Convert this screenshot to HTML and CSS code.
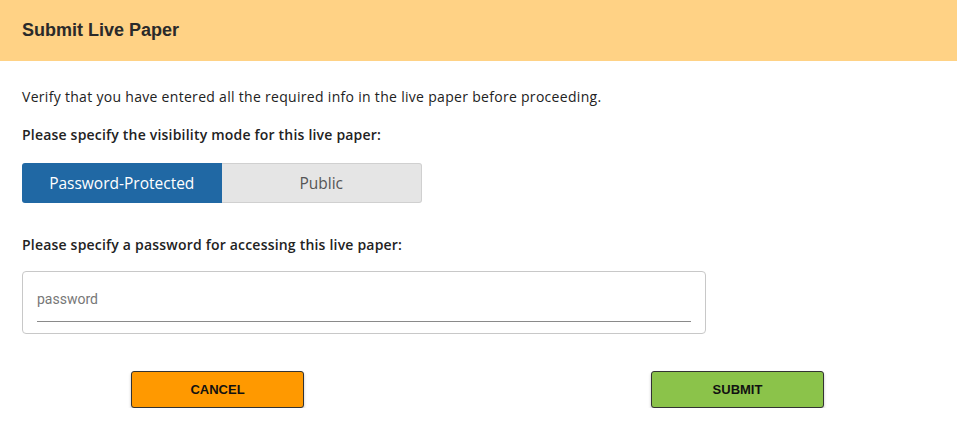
FILE: index.html
```html
<!DOCTYPE html>
<html>
<head>
<meta charset="utf-8">
<link rel="stylesheet" href="styles.css">
</head>
<body>
<div class="dialog">
  <div class="header"><h1 class="title">Submit Live Paper</h1></div>
  <div class="content">
    <p class="intro">Verify that you have entered all the required info in the live paper before proceeding.</p>
    <p class="label">Please specify the visibility mode for this live paper:</p>
    <div class="toggle">
      <div class="opt active">Password-Protected</div>
      <div class="opt">Public</div>
    </div>
    <p class="label label2">Please specify a password for accessing this live paper:</p>
    <div class="field">
      <div class="input">password</div>
    </div>
    <div class="actions">
      <button class="btn cancel">CANCEL</button>
      <button class="btn submit">SUBMIT</button>
    </div>
  </div>
</div>
</body>
</html>
```
FILE: styles.css
```css
html, body { margin: 0; padding: 0; background: #fff; }
.dialog { width: 957px; font-family: "Open Sans", "DejaVu Sans", sans-serif; color: #222; }
.header { background: #ffd285; height: 61px; display: flex; align-items: center; padding-left: 22px; }
.title { margin: 0; font-family: "Liberation Sans", Arial, sans-serif; font-weight: bold; font-size: 18px; color: #2a2a2a; }
.content { padding: 24px 22px 0 22px; }
.intro { margin: 0; font-size: 14px; line-height: 24px; letter-spacing: 0.3px; }
.label { margin: 14px 0 0 0; font-size: 14px; font-weight: 600; line-height: 24px; letter-spacing: 0.2px; }
.toggle { display: flex; width: 400px; height: 40px; margin-top: 16px; }
.opt { flex: 1; display: flex; align-items: center; justify-content: center; font-size: 15.5px; color: #555; background: #e5e5e5; border: 1px solid #d0d0d0; border-left: none; border-radius: 0 3px 3px 0; box-sizing: border-box; }
.opt.active { background: #2068a4; color: #fff; border: none; border-radius: 3px 0 0 3px; }
.label2 { margin-top: 30px; }
.field { width: 684px; height: 63px; box-sizing: border-box; border: 1px solid #c8c8c8; border-radius: 4px; margin-top: 14px; padding: 14px 14px 0 14px; }
.input { font-family: Roboto, sans-serif; font-size: 14px; color: #777; height: 36px; line-height: 27px; border-bottom: 1px solid #8a8a8a; box-sizing: border-box; }
.actions { display: flex; gap: 347px; padding-left: 109px; margin-top: 37px; }
.btn { width: 173px; height: 37px; font-family: "Liberation Sans", Arial, sans-serif; font-weight: bold; font-size: 13px; color: #111; border: 1px solid #333; border-radius: 3px; box-shadow: 0 2px 3px rgba(0,0,0,0.25); cursor: pointer; }
.cancel { background: #ff9900; }
.submit { background: #8bc34a; }
```
